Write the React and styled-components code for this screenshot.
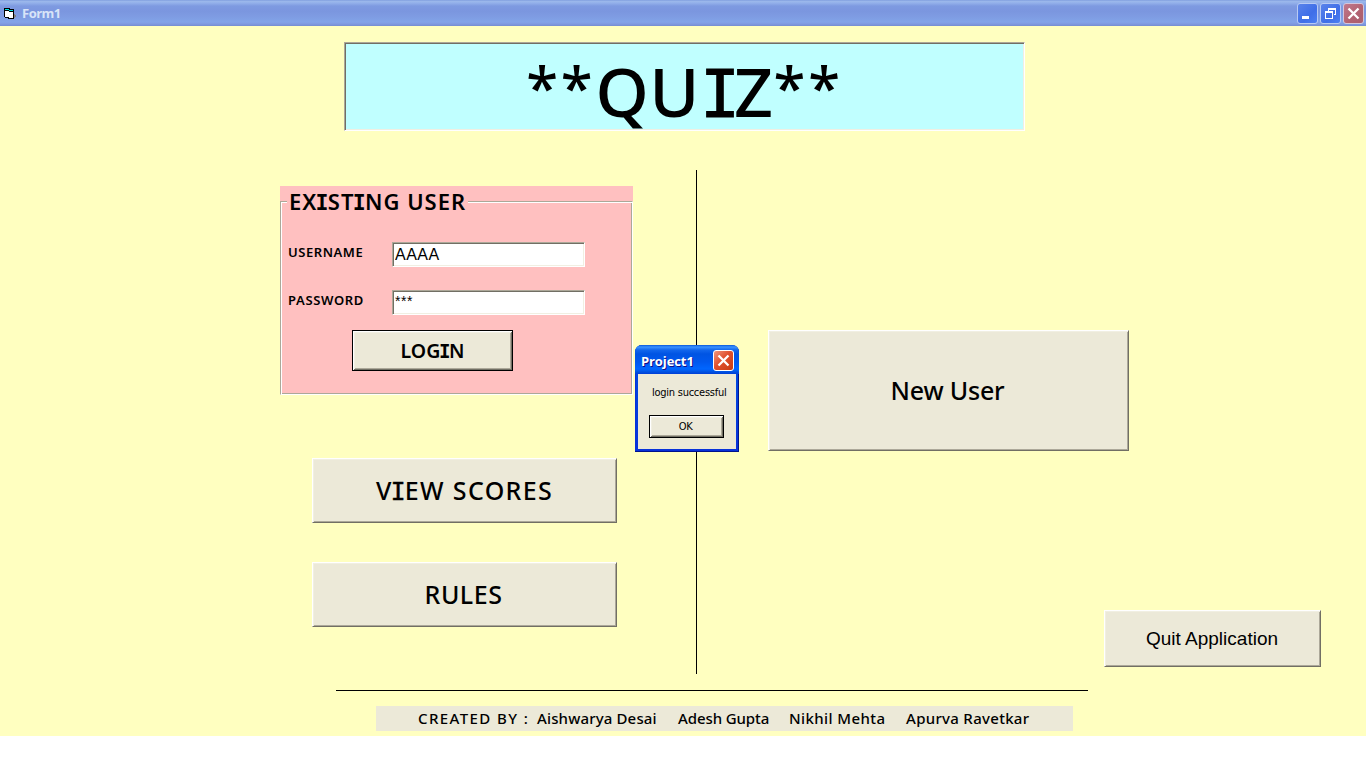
import React from "react";
import styled, { createGlobalStyle, css } from "styled-components";

const GlobalStyle = createGlobalStyle`
  * { box-sizing: border-box; }
  html, body { margin: 0; padding: 0; background: #fff; overflow: hidden; }
  button, input { font: inherit; color: inherit; margin: 0; border-radius: 0; outline: none; }
`;

const comic = `"Comic Sans MS", "Noto Sans", "Open Sans", sans-serif`;

const sunken = css`
  border: 1px solid;
  border-color: #aca899 #fff #fff #aca899;
  box-shadow: inset 1px 1px 0 #716f64, inset -1px -1px 0 #f1efe2;
`;
const raised = css`
  border: 1px solid;
  border-color: #fff #716f64 #716f64 #fff;
  box-shadow: inset 1px 1px 0 #f1efe2, inset -1px -1px 0 #aca899;
`;

const Window = styled.main`
  position: relative;
  width: 1366px;
  height: 768px;
  background: #fff;
  color: #000;
  font-family: ${comic};
`;

const TitleBar = styled.header`
  display: flex;
  align-items: center;
  height: 26px;
  padding: 0 2px 0 3px;
  background: linear-gradient(#7695db 0, #9db9eb 1px, #93b0ea 3px, #7e9ae1 6px, #7b96df 11px, #7e9be2 16px, #82a3e8 22px, #7f99e0 24px, #758dd0 26px);
`;
const TitleText = styled.span`
  flex: 1;
  margin-left: 6px;
  font: 700 13px/18px "Trebuchet MS", "Open Sans", sans-serif;
  letter-spacing: -0.5px;
  color: #d8e4f8;
`;
const Controls = styled.div`
  display: flex;
  gap: 2px;
`;
const ControlButton = styled.button`
  display: flex;
  width: 21px;
  height: 21px;
  padding: 0;
  border: 1px solid ${(p) => (p.$close ? "#d3c6dc" : "#b8caf4")};
  border-radius: 3px;
  background: ${(p) =>
    p.$close
      ? "linear-gradient(135deg, #c0788c, #b26271 60%, #a9606f)"
      : "linear-gradient(135deg, #5a83ea, #3f6ee8 60%, #4c80f2)"};
`;

/* Capital I with top and bottom bars */
const BarredI = styled.span`
  margin: ${(p) => (p.$large ? "0" : "0 -0.08em")};
  font-family: "Comic Sans MS", "DejaVu Sans Mono", monospace;
  font-size: 0.98em;
  line-height: 1;
  ${(p) => p.$large && "letter-spacing: -6px;"}
  ${(p) => p.$stroke && `-webkit-text-stroke: ${p.$stroke}px #000;`}
`;
const Stars = styled.span`
  position: relative;
  top: -8px;
  font-size: 58px;
  line-height: 1;
  letter-spacing: 2.8px;
`;

const Form = styled.section`
  display: flex;
  flex-direction: column;
  height: 710px;
  padding-top: 16px;
  background: #ffffc0;
`;
const Banner = styled.h1`
  ${sunken}
  width: 681px;
  height: 89px;
  margin: 0 0 0 344px;
  background: #c0ffff;
  font-size: 68px;
  font-weight: 500;
  line-height: 95px;
  letter-spacing: 0.5px;
  text-align: center;
  white-space: nowrap;
`;
const Body = styled.div`
  display: flex;
  height: 504px;
  margin-top: 39px;
  padding-left: 280px;
`;
const LeftColumn = styled.div`
  display: flex;
  flex-direction: column;
  width: 353px;
  padding-top: 16px;
`;
const Divider = styled.div`
  width: 1px;
  height: 504px;
  margin-left: 63px;
  background: #000;
`;
const RightColumn = styled.div`
  display: flex;
  flex-direction: column;
  width: 553px;
  margin-left: 71px;
  padding-top: 160px;
`;

const Group = styled.div`
  display: flex;
  flex-direction: column;
  height: 208px;
  background: linear-gradient(#ffc0c0, #ffc0c0) 0 0 / 353px 16px no-repeat;
`;
const GroupFrame = styled.div`
  flex: none;
  height: 194px;
  width: 353px;
  margin-top: 15px;
  border: 1px solid;
  border-color: #aca899 #fff #fff #aca899;
  box-shadow: inset 1px 1px 0 #fff, inset -1px -1px 0 #aca899;
  background: #ffc0c0;
`;
const Legend = styled.h2`
  width: 181px;
  height: 28px;
  margin: -15px 0 0 6px;
  padding-left: 2px;
  background: #ffc0c0;
  font-size: 22px;
  font-weight: 600;
  line-height: 28px;
  letter-spacing: 1px;
  white-space: nowrap;
`;
const Field = styled.label`
  display: flex;
  height: 25px;
  margin: ${(p) => p.$top}px 0 0 7px;
`;
const FieldName = styled.span`
  width: 104px;
  font-size: 13px;
  font-weight: 600;
  line-height: 20px;
  letter-spacing: ${(p) => p.$spacing}px;
`;
const Input = styled.input`
  ${sunken}
  width: 193px;
  height: 25px;
  padding: ${(p) => (p.$masked ? "0 2px 3px" : "1px 2px 0")};
  background: #fff;
  font: ${(p) => (p.$masked ? "14px" : "16px")} "Liberation Sans", sans-serif;
  letter-spacing: 0.5px;
`;

const PushButton = styled.button`
  ${raised}
  display: flex;
  align-items: center;
  justify-content: center;
  width: ${(p) => p.$w}px;
  height: ${(p) => p.$h}px;
  margin: ${(p) => p.$margin};
  padding: ${(p) => p.$pad || "0 0 2px"};
  background: #ece9d8;
  font-size: ${(p) => p.$size}px;
  font-weight: ${(p) => p.$weight || 600};
  letter-spacing: ${(p) => p.$spacing || 0}px;
  white-space: nowrap;
  ${(p) => p.$face && `font-family: ${p.$face};`}
  ${(p) =>
    p.$default &&
    css`
      border-color: #000;
      box-shadow: inset 1px 1px 0 #fff, inset -1px -1px 0 #716f64,
        inset 2px 2px 0 #f1efe2, inset -2px -2px 0 #aca899;
    `}
`;

const Rule = styled.div`
  flex: none;
  width: 752px;
  height: 1px;
  margin: 16px 0 0 336px;
  background: #000;
`;
const Credits = styled.footer`
  display: flex;
  width: 697px;
  height: 25px;
  margin: 15px 0 0 376px;
  padding-left: 42px;
  background: #ece9d8;
  font-size: 15px;
  font-weight: 500;
  line-height: 24px;
  white-space: nowrap;
`;
const Credit = styled.span`
  width: ${(p) => p.$w}px;
  letter-spacing: ${(p) => p.$spacing}px;
`;

const Dialog = styled.div`
  position: absolute;
  left: 635px;
  top: 345px;
  width: 104px;
  height: 107px;
  padding: 0 3px 3px;
  border-radius: 7px 7px 0 0;
  background: linear-gradient(#0a50d8, #0048e0 28px, #0831d9);
  box-shadow: inset -1px -1px 0 #00138c, inset 1px 0 0 #0831d9;
  overflow: hidden;
`;
const DialogTitle = styled.div`
  display: flex;
  align-items: center;
  justify-content: space-between;
  height: 29px;
  margin: 0 -3px;
  padding: 2px 5px 0 6px;
  background: linear-gradient(#0958d8 0, #3a93ff 2px, #1166ec 5px, #0054e3 9px, #0058ee 17px, #0066ff 24px, #0050e0 27px, #003dd7 29px);
  color: #fff;
  font: 700 13px/18px "Trebuchet MS", "Open Sans", sans-serif;
  text-shadow: 1px 1px 0 #0f1089;
  letter-spacing: -0.1px;
`;
const DialogClose = styled.button`
  display: flex;
  width: 21px;
  height: 21px;
  padding: 0;
  border: 1px solid #fff;
  border-radius: 3px;
  background: linear-gradient(135deg, #f0967c, #e0512f 45%, #c93c12);
`;
const DialogBody = styled.div`
  height: 75px;
  padding: 11px 0 0 11px;
  background: #ece9d8;
  font: 11px/15px Tahoma, "DejaVu Sans Condensed", "DejaVu Sans", sans-serif;
`;
const Message = styled.p`
  margin: 0 0 15px 3px;
  letter-spacing: -0.25px;
  white-space: nowrap;
`;

const Cross = () => (
  <svg width="19" height="19" viewBox="0 0 19 19">
    <path d="M4.5 4.5l10 10M14.5 4.5l-10 10" stroke="#fff" strokeWidth="2.3" fill="none" />
  </svg>
);

export default function App() {
  return (
    <Window>
      <GlobalStyle />
      <TitleBar>
        <svg width="13" height="13" viewBox="0 0 13 13" shapeRendering="crispEdges">
          <path d="M10 6h1v1h1v1h1v2h-1v1h-2z" fill="#808080" />
          <path d="M1 1h6v1h4v10H5v-1H2v-1H1z" fill="#000" />
          <path d="M2 4h4v1h4v6H6v-1H2z" fill="#fff" />
          <path d="M2 2h4v1h4v1H6V3H2z" fill="#00e0e0" />
        </svg>
        <TitleText>Form1</TitleText>
        <Controls>
          <ControlButton aria-label="Minimize">
            <svg width="19" height="19"><path d="M4 12h7v3H4z" fill="#fff" /></svg>
          </ControlButton>
          <ControlButton aria-label="Restore">
            <svg width="19" height="19" shapeRendering="crispEdges">
              <path d="M7 4h8v7h-2V10h1V6H8v1H7zM4 7h8v8H4zM5 9v5h6V9z" fill="#fff" fillRule="evenodd" />
            </svg>
          </ControlButton>
          <ControlButton $close aria-label="Close"><Cross /></ControlButton>
        </Controls>
      </TitleBar>

      <Form>
        <Banner>
          <Stars>**</Stars>QU<BarredI $large $stroke={0.8}>I</BarredI>Z<Stars>**</Stars>
        </Banner>
        <Body>
          <LeftColumn>
            <Group>
              <GroupFrame>
                <Legend>EX<BarredI>I</BarredI>ST<BarredI>I</BarredI>NG USER</Legend>
                <Field $top={27}>
                  <FieldName $spacing={0.55}>USERNAME</FieldName>
                  <Input defaultValue="AAAA" />
                </Field>
                <Field $top={23}>
                  <FieldName $spacing={0.65}>PASSWORD</FieldName>
                  <Input $masked defaultValue="***" />
                </Field>
                <PushButton $default $w={161} $h={41} $margin="15px 0 0 71px" $pad="0" $size={19.5} $weight={600} $spacing={0.1}>
                  <span>LOG<BarredI>I</BarredI>N</span>
                </PushButton>
              </GroupFrame>
            </Group>
            <PushButton $w={305} $h={65} $margin="64px 0 0 32px" $size={25} $weight={500} $spacing={1.35}>
              <span>V<BarredI $stroke={0.5}>I</BarredI>EW SCORES</span>
            </PushButton>
            <PushButton $w={305} $h={65} $margin="39px 0 0 32px" $pad="0 2px 2px 0" $size={25} $weight={500} $spacing={0.5}>RULES</PushButton>
          </LeftColumn>
          <Divider />
          <RightColumn>
            <PushButton $w={361} $h={121} $margin="0" $pad="0 2px 2px 0" $size={25} $weight={500} $spacing={-0.2}>New User</PushButton>
            <PushButton $w={217} $h={57} $margin="159px 0 0 336px" $pad="0 1px 0 0" $size={19} $weight={400} $face='"Liberation Sans", sans-serif'>
              Quit Application
            </PushButton>
          </RightColumn>
        </Body>
        <Rule />
        <Credits>
          <Credit $w={119} $spacing={1.4}>CREATED BY :</Credit>
          <Credit $w={141} $spacing={0.15}>Aishwarya Desai</Credit>
          <Credit $w={111} $spacing={-0.1}>Adesh Gupta</Credit>
          <Credit $w={117} $spacing={0.4}>Nikhil Mehta</Credit>
          <Credit $w={130} $spacing={0.3}>Apurva Ravetkar</Credit>
        </Credits>
      </Form>

      <Dialog role="dialog">
        <DialogTitle>
          <span>Project1</span>
          <DialogClose aria-label="Close"><Cross /></DialogClose>
        </DialogTitle>
        <DialogBody>
          <Message>login successful</Message>
          <PushButton $default $w={75} $h={23} $margin="0" $pad="0 2px 0 0" $size={11} $weight={400} $spacing={-0.5}>OK</PushButton>
        </DialogBody>
      </Dialog>
    </Window>
  );
}
